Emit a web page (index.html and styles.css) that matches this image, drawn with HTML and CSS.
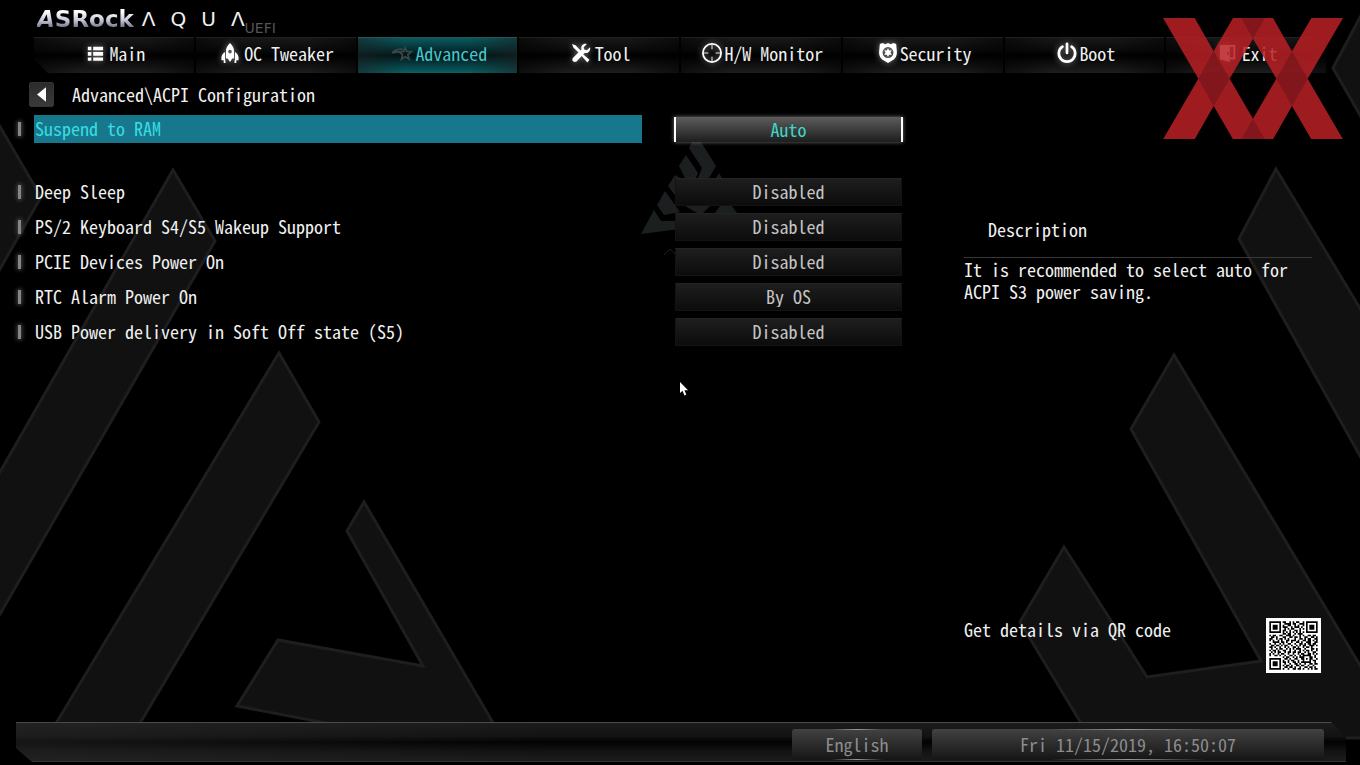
FILE: index.html
```
<!DOCTYPE html>
<html lang="en">
  <head>
    <meta charset="utf-8">
    <meta name="viewport" content="width=device-width, initial-scale=1">
    <title>ASRock AQUA UEFI</title>
    <link rel="stylesheet" href="styles.css">
  </head>
  <body>
    <svg class="backdrop" viewBox="0 0 1360 765" preserveAspectRatio="xMidYMid slice" aria-hidden="true">
      <g class="slabs">
        <path d="M-4 120L41 197L-4 276Z"/>
        <path d="M173 170L215 241L-4 621V479Z"/>
        <path d="M279 353L319 422L127 745H43Z"/>
        <path d="M364 502L347 531L423 666L278 640L237 706L440 745H506Z"/>
        <path d="M1364 10L1333 68L1364 122Z"/>
        <path d="M1276 169L1239 239L1364 463V315Z"/>
        <path d="M1174 355L1131 429L1261 661L1147 677L1064 547L1020 622L1090 738H1364V672Z"/>
      </g>
      <g class="emblem">
        <path d="M692 142h9L716 166L709 178H698L702 168L689 148Z"/>
        <path d="M686 155L698 173L696 178H685L679 166Z"/>
        <path d="M675 175L680 178V202L668 186Z"/>
        <path d="M665 191L657 205L664 215L680 212Z"/>
        <path d="M654 210L641 234L680 229V221H661Z"/>
        <path d="M719 173L722 178H716Z"/>
        <path d="M685 206L697 213H703L710 206Z"/>
        <path d="M720 206L715 213H737L732 206Z"/>
        <path class="caret" d="M664 255L670 249L676 255"/>
      </g>
    </svg>

    <header>
      <h1 class="brand">
        <span class="asrock"><i>A</i>SRock</span>
        <span class="aqua"><span>Λ</span><span>Q</span><span>U</span><span>Λ</span></span>
        <span class="uefi">UEFI</span>
      </h1>
      <nav class="tabs">
        <a href="#main">
          <svg class="icon" viewBox="0 0 20 20"><path d="M2 3h4v4H2zM8 3h11v4H8zM2 9h4v4H2zM8 9h11v4H8zM2 15h4v3.500H2zM8 15h11v3.500H8z"/></svg>Main
        </a>
        <a href="#oc">
          <svg class="icon" viewBox="0 0 20 20"><path fill-rule="evenodd" d="M10 -1C13 2 14.500 5 14.500 8V16H12.500L10 20L7.500 16H5.500V8C5.500 5 7 2 10 -1ZM10 6.500A2 2 0 1 0 10 10.500A2 2 0 1 0 10 6.500Z"/><path d="M4.500 9C1 11 0 14 .5 18H4.500ZM15.500 9C19 11 20 14 19.500 18H15.500ZM3 18h2v3H3zM15 18h2v3h-2z"/></svg>OC Tweaker
        </a>
        <a href="#advanced" class="active" aria-current="page">
          <svg class="icon star" viewBox="0 0 24 20"><path d="M15.500 4L17.200 8.300L22.500 8.500L18.500 12L20 17L15.500 14.200L11.500 17L12.500 12L9.500 9L13.800 8.300Z"/><path d="M1 10C5 6 9 5 13 6M1 10C5 8.500 7 8.500 10 9"/></svg>Advanced
        </a>
        <a href="#tool">
          <svg class="icon" viewBox="0 0 20 20"><path d="M0 0L4 1.500L11 9L9 11L1.500 4ZM12 11L19.500 17.500L17 20.500L10.500 13Z"/><path d="M20 3.500L16.500 7L13.500 6L13 3.500L16.500 0C13 -1 9.500 1.500 10.500 6L1.500 15C0 16.500 0 18.500 1.500 19.500C3 20.500 4.800 20 5.800 18.700L14 10C18.500 10.500 21 7 20 3.500Z"/></svg>Tool
        </a>
        <a href="#monitor">
          <svg class="icon big" viewBox="0 0 22 22"><path class="line" d="M11 1A10 10 0 1 0 11 21A10 10 0 1 0 11 1Z"/><path class="thin" d="M11 2V7M11 15V20M2 11H7M15 11H20"/></svg>H/W Monitor
        </a>
        <a href="#security">
          <svg class="icon big" viewBox="0 0 22 22"><path fill-rule="evenodd" d="M2 1L5 0L8 1.500L11 0L14 1.500L17 0L20 1L20.500 7C21.500 13 20 17 16 19L11 22L6 19C2 17 .5 13 1.500 7ZM11 4.500A6 6 0 1 0 11 16.500A6 6 0 1 0 11 4.500Z"/><path d="M11 5.500L12.300 8.200L15.300 8L13.600 10.500L15.300 13L12.300 12.800L11 15.500L9.700 12.800L6.700 13L8.400 10.500L6.700 8L9.700 8.200Z"/></svg>Security
        </a>
        <a href="#boot">
          <svg class="icon big" viewBox="0 0 22 22"><path class="power" d="M6 4A9 9 0 1 0 16 4M11 1V11"/></svg>Boot
        </a>
        <a href="#exit">
          <svg class="icon" viewBox="0 0 20 20"><path fill-rule="evenodd" d="M1 1H18V17H12V20L1 17ZM12 3V15H16V3ZM9 9v3h2V9Z"/></svg>Exit
        </a>
      </nav>
      <div class="crumbs">
        <button class="back" type="button" aria-label="Back"><svg viewBox="0 0 10 16"><path d="M10 0V16L0 8Z"/></svg></button>
        <h2>Advanced\ACPI Configuration</h2>
      </div>
    </header>

    <main>
      <form class="settings">
        <div class="row selected">
          <label for="suspend">Suspend to RAM</label>
          <select id="suspend"><option>Auto</option><option>Disabled</option></select>
        </div>
        <div class="row">
          <label for="deep">Deep Sleep</label>
          <select id="deep"><option>Disabled</option><option>Enabled</option></select>
        </div>
        <div class="row">
          <label for="ps2">PS/2 Keyboard S4/S5 Wakeup Support</label>
          <select id="ps2"><option>Disabled</option><option>Enabled</option></select>
        </div>
        <div class="row">
          <label for="pcie">PCIE Devices Power On</label>
          <select id="pcie"><option>Disabled</option><option>Enabled</option></select>
        </div>
        <div class="row">
          <label for="rtc">RTC Alarm Power On</label>
          <select id="rtc"><option>By OS</option><option>Enabled</option></select>
        </div>
        <div class="row">
          <label for="usb">USB Power delivery in Soft Off state (S5)</label>
          <select id="usb"><option>Disabled</option><option>Enabled</option></select>
        </div>
      </form>

      <aside>
        <h3>Description</h3>
        <p>It is recommended to select auto for ACPI S3 power saving.</p>
        <div class="details">
          <span>Get details via QR code</span>
          <svg id="qr" viewBox="-2 -2 33 33" role="img" aria-label="QR code"></svg>
        </div>
      </aside>
    </main>

    <footer>
      <div class="bar">
        <button class="language" type="button">English</button>
        <time datetime="2019-11-15T16:50:07">Fri 11/15/2019, 16:50:07</time>
      </div>
    </footer>

    <svg class="stamp" viewBox="0 0 540 364" aria-hidden="true">
      <path d="M0 0H95L152 100L210 0H330L387 100L445 0H540L434 182L540 364H445L387 264L330 364H210L152 264L95 364H0L106 182ZM270 62L200 182L270 302L340 182Z" fill-rule="evenodd"/>
      <path class="overlap" d="M152 100L200 182L152 264L106 182ZM387 100L434 182L387 264L340 182ZM235 0H305L270 62ZM235 364H305L270 302Z"/>
    </svg>
    <svg class="pointer" viewBox="0 0 8 14" aria-hidden="true"><path d="M0 0V11L2.500 8.800L4.500 13.500L6.300 12.600L4.400 8.200H8Z"/></svg>

    <script src="qr.js"></script>
  </body>
</html>
```
FILE: styles.css
```
* {
  box-sizing: border-box;
}
body {
  position: relative;
  display: flex;
  flex-direction: column;
  min-height: 100vh;
  margin: 0;
  background: #000;
  color: #f0f0f0;
  overflow-x: hidden;
}
body, button, select {
  font-family: "Noto Sans Mono CJK JP", "Noto Sans CJK JP", monospace;
  font-feature-settings: "hwid";
  font-size: 18px;
  line-height: 22px;
}
h1, h2, h3, p {
  margin: 0;
  font-size: 18px;
  font-weight: normal;
}

.backdrop {
  position: absolute;
  z-index: -1;
  width: 100%;
  height: 100%;
}
.slabs {
  fill: #111;
  stroke: #1e1e1e;
  stroke-width: 3;
}
.emblem {
  fill: #1c1f1f;
}
.emblem .caret {
  fill: none;
  stroke: #1c1f1f;
  stroke-width: 1;
}

/* logo */
.brand {
  display: flex;
  height: 37px;
  padding: 7px 37px 0;
}
.asrock {
  height: 24px;
  font: bold 23px/24px "DejaVu Sans", sans-serif;
  color: transparent;
  background: linear-gradient(#fff 20%, #c4c8d4 55%, #6d7488 85%);
  -webkit-background-clip: text;
  background-clip: text;
}
.aqua {
  display: flex;
  gap: 15px;
  margin-left: 8px;
  font: 20px/24px "DejaVu Sans", sans-serif;
}
.uefi {
  margin-top: 9px;
  font: 14px/24px "DejaVu Sans", sans-serif;
  color: #555;
}

/* tabs */
.tabs {
  display: grid;
  grid-template-columns: repeat(8, 1fr);
  gap: 2px;
  height: 36px;
  padding: 0 34px;
}
.tabs a {
  display: flex;
  align-items: center;
  justify-content: center;
  gap: 5px;
  padding: 0 0 6px 4px;
  border-top: 1px solid #1f1f1f;
  background:
    linear-gradient(90deg, rgba(0, 0, 0, .5), transparent 30%, transparent 70%, rgba(0, 0, 0, .5)),
    linear-gradient(#181818, #0a0a0a 35%, #000 50%, #0d0d0d 70%, #1e1e1e);
  color: #f0f0f0;
  text-decoration: none;
}
.tabs a:first-child {
  clip-path: polygon(0 0, 100% 0, 100% 100%, 14px 100%, 0 22px);
}
.tabs a:last-child {
  clip-path: polygon(0 0, calc(100% - 14px) 0, 100% 14px, 100% 100%, 0 100%);
}
.tabs .active {
  border-top-color: #2b5557;
  background:
    linear-gradient(90deg, rgba(25, 35, 35, .6), transparent 30%, transparent 70%, rgba(25, 35, 35, .6)),
    linear-gradient(#0a5b60, #043236 30%, #011416 50%, #053c40 75%, #0b5f64);
  color: #45c6cc;
}
.icon {
  width: 18px;
  height: 18px;
  fill: #fff;
  overflow: visible;
  filter: drop-shadow(0 0 3px rgba(255, 255, 255, .5));
}
.big {
  width: 20px;
  height: 20px;
}
.tabs .big {
  margin-right: -3px;
}
.icon .line, .icon .thin, .icon .power {
  fill: none;
  stroke: #fff;
  stroke-width: 2;
}
.icon .thin {
  stroke-width: 1;
}
.icon .power {
  stroke-width: 3;
  stroke-linecap: round;
}
.tabs .star {
  width: 22px;
  fill: none;
  stroke: #3a4748;
  stroke-width: 2;
  filter: none;
  margin-right: -3px;
}

.crumbs {
  display: flex;
  align-items: center;
  gap: 18px;
  height: 42px;
  padding: 0 29px;
}
.back {
  display: grid;
  place-items: center;
  width: 25px;
  height: 25px;
  padding: 0;
  border: 1px solid #333;
  border-radius: 2px;
  background: linear-gradient(#2b2b2b, #3a3a3a);
}
.back svg {
  width: 9px;
  height: 15px;
  fill: #fff;
}

/* settings */
main {
  flex: 1;
  display: grid;
  grid-template-columns: 887fr 357fr;
  column-gap: 61px;
  padding: 0 39px 0 16px;
}
.settings {
  display: flex;
  flex-direction: column;
  gap: 7px;
}
.row {
  display: grid;
  grid-template-columns: 18px 608fr 261fr;
  align-items: center;
  height: 28px;
}
.row::before {
  content: "";
  width: 3px;
  height: 14px;
  background: #858585;
  box-shadow: 0 0 4px 1px #4a4a4a;
  margin-left: 2px;
}
.row label {
  padding: 0 0 2px 1px;
  line-height: 26px;
}
.row select {
  height: 28px;
  margin: 0 1px 0 33px;
  padding: 0 0 2px;
  border: 1px solid #131313;
  border-top-color: #242424;
  border-radius: 0;
  background: linear-gradient(#1e1e1e, #0c0c0c);
  color: #c4c4c4;
  appearance: none;
  text-align: center;
  text-align-last: center;
}
.selected {
  margin-bottom: 28px;
}
.selected label {
  background: #17778c;
  color: #38dde0;
}
.selected select {
  height: 25px;
  margin: 0 0 0 32px;
  padding: 0;
  border: solid #fff;
  border-width: 0 2px;
  background: linear-gradient(#5c5c5c, #1e1e1e);
  box-shadow: 0 0 4px #777;
  color: #3fd6c6;
}

/* description */
aside {
  display: flex;
  flex-direction: column;
  padding: 103px 0 49px;
}
aside h3 {
  padding-left: 24px;
}
aside p {
  margin: 17px 9px 0 0;
  border-top: 1px solid #383838;
}
.details {
  display: flex;
  justify-content: space-between;
  margin-top: auto;
}
.details svg {
  width: 55px;
  height: 55px;
  background: #fff;
}

/* bottom bar */
footer {
  padding: 0 14px 3px 16px;
}
.bar {
  display: grid;
  grid-template-columns: 766fr 130fr 392fr;
  gap: 10px;
  height: 40px;
  padding: 6px 22px 2px 0;
  border-top: 1px solid #4a4a4a;
  border-bottom: 1px solid #333;
  background:
    linear-gradient(90deg, rgba(40, 40, 40, .5), transparent 40%),
    linear-gradient(#1c1c1c, #121212 35%, #020202 50%, #131313 75%, #1c1c1c);
  clip-path: polygon(0 0, calc(100% - 15px) 0, 100% 15px, 100% 100%, 16px 100%, 0 26px);
}
.language {
  grid-column: 2;
}
.bar button, .bar time {
  padding: 0;
  border: 0;
  border-radius: 3px;
  background:
    linear-gradient(90deg, transparent 30%, #999, transparent 70%) top / 100% 1px no-repeat,
    linear-gradient(90deg, transparent 30%, #999, transparent 70%) bottom / 100% 1px no-repeat,
    linear-gradient(#424242, #151515);
  color: #8c8c8c;
  line-height: 31px;
  text-align: center;
}

.stamp {
  position: absolute;
  top: 18px;
  right: 17px;
  width: 180px;
  fill: rgba(184, 32, 37, .86);
}
.stamp .overlap {
  fill: rgba(100, 20, 24, .5);
}
.pointer {
  position: absolute;
  top: 382px;
  left: 50%;
  width: 8px;
  height: 14px;
  fill: #fff;
}
```
FILE: qr.js
```
// 29x29 modules, # is dark
var rows = [
  '#######.##..#.#.##..#.#######',
  '#.....#..####.##..###.#.....#',
  '#.###.#.#..##..#.#..#.#.###.#',
  '#.###.#.###..#.###.#..#.###.#',
  '#.###.#..#.#.##...#.#.#.###.#',
  '#.....#.##..#..##.#...#.....#',
  '#######.#.#.#.#.#.#.#.#######',
  '........##.##..#.###.........',
  '#.##..##..###.#...#.#..##.##.',
  '.##.#...##..##.##.#..##..##.#',
  '##..#.##.#.#...#..##.#.##..##',
  '#.#..#.#..##.###.#..##.##.#.#',
  '..####.##.#..#..##.#..###..##',
  '#..#..#.#..##..#..##.#.##.##.',
  '.##.##.#.##..#..#.#.##..###.#',
  '##.#..#..#.#..##.#..#.##.#...',
  '.#..#.##..#.#.#.###..#...##.#',
  '#.##.#..##..#..#..#.#.##.#..#',
  '.#.#.##..#.##.##.##..#.#..##.',
  '#.#..#.##..#..#..#.##..##.#.#',
  '#..##.#..#..##.#..#.#####..#.',
  '........#.##..#.#.###...##.#.',
  '#######..##.#..##..##.#.##..#',
  '#.....#.#..#.##..#..#...#.##.',
  '#.###.#.##.#..##.#.######..#.',
  '#.###.#..#..#..##.#..#..##.##',
  '#.###.#.#.##.#..##.##..#..#..',
  '#.....#..##.##.#..#..##.##.#.',
  '#######.#..#..##.##.#..#.#.##'
];

var d = '';
rows.forEach(function(row, y) {
  for (var x = 0; x < row.length; x++) {
    if (row[x] == '#') d += 'M' + x + ' ' + y + 'h1v1h-1z';
  }
});
var path = document.createElementNS('http://www.w3.org/2000/svg', 'path');
path.setAttribute('d', d);
document.getElementById('qr').appendChild(path);
```
